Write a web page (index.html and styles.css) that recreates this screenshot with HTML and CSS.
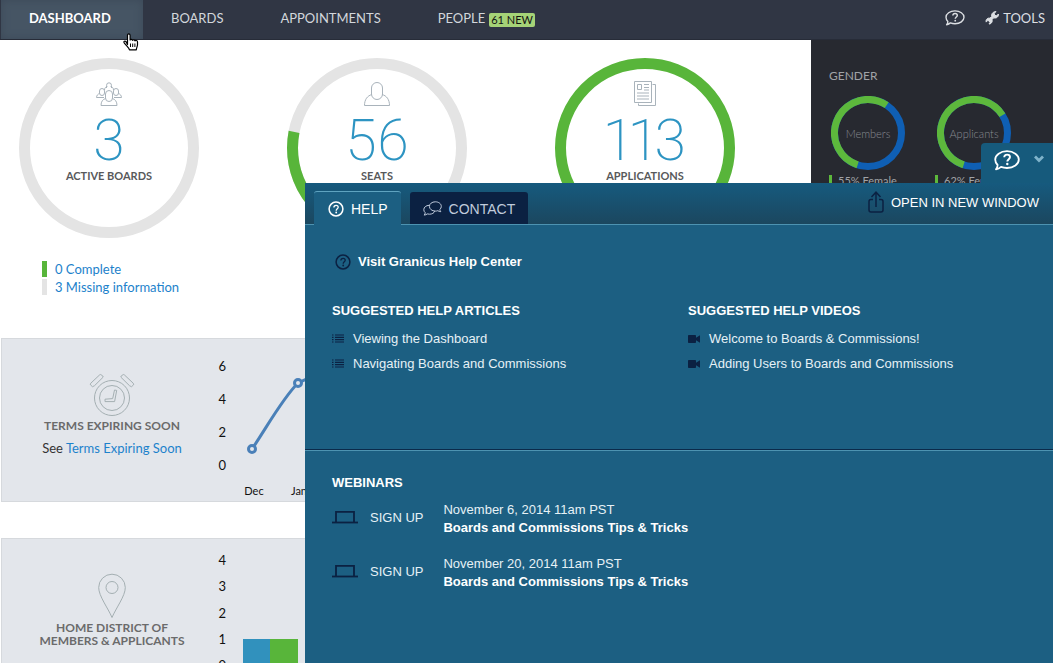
FILE: index.html
```html
<!DOCTYPE html>
<html lang="en">
<head>
  <meta charset="UTF-8">
  <title>Dashboard - Boards &amp; Commissions</title>
  <meta name="viewport" content="width=device-width, initial-scale=1">
  <link rel="stylesheet" href="styles.css">
</head>
<body>

  <!-- shared icons -->
  <svg class="defs" width="0" height="0" aria-hidden="true">
    <symbol id="i-bubble" viewBox="0 0 26 21">
      <path d="M13 1.200C19.600 1.200 24.800 5 24.800 9.600S19.600 18 13 18c-2.200 0-4.200-.4-6-1.100-1.400 1.200-3 2-5 2.400 1.100-1.300 1.600-2.800 1.600-4.300C2.100 13.500 1.200 11.600 1.200 9.600 1.200 5 6.400 1.200 13 1.200z" fill="none" stroke="currentColor" stroke-width="1.800" stroke-linejoin="round"/>
      <path d="M10.200 7.300c.1-1.700 1.200-2.700 2.900-2.700s2.900 1 2.900 2.500c0 2-2.700 2.200-2.700 4.500" fill="none" stroke="currentColor" stroke-width="1.900"/>
      <circle cx="13.300" cy="14" r="1.200" fill="currentColor"/>
    </symbol>
    <symbol id="i-question" viewBox="0 0 16 16">
      <circle cx="8" cy="8" r="6.900" fill="none" stroke="currentColor" stroke-width="1.500"/>
      <path d="M5.900 6.500c0-1.400.9-2.200 2.200-2.200s2.100.8 2.100 1.900c0 1.500-2 1.700-2 3.500" fill="none" stroke="currentColor" stroke-width="1.300"/>
      <circle cx="8.200" cy="11.500" r=".9" fill="currentColor"/>
    </symbol>
    <symbol id="i-list" viewBox="0 0 12 9">
      <path d="M0 1h1.500M0 3.300h1.500M0 5.700h1.500M0 8h1.500M3 1h9M3 3.300h9M3 5.700h9M3 8h9" stroke="currentColor" stroke-width="1.200"/>
    </symbol>
    <symbol id="i-video" viewBox="0 0 12 8">
      <path d="M0 .8Q0 0 .8 0h6.400Q8 0 8 .8v2L12 .3v7.400L8 5.200v2q0 .8-.8.8H.8Q0 8 0 7.200z" fill="currentColor"/>
    </symbol>
    <symbol id="i-laptop" viewBox="0 0 26 14">
      <path d="M4 12V1.800h18V12" fill="none" stroke="currentColor" stroke-width="1.800"/>
      <path d="M0 12.500h26" stroke="currentColor" stroke-width="1.800"/>
    </symbol>
  </svg>

  <header class="topbar">
    <nav class="nav">
      <a href="#" class="nav-item active">DASHBOARD</a>
      <a href="#" class="nav-item">BOARDS</a>
      <a href="#" class="nav-item">APPOINTMENTS</a>
      <a href="#" class="nav-item">PEOPLE <span class="badge">61 NEW</span></a>
    </nav>
    <div class="tools">
      <a href="#" class="tool" aria-label="Help"><svg width="20" height="16"><use href="#i-bubble"/></svg></a>
      <a href="#" class="tool">
        <svg width="14" height="14" viewBox="0 0 14 14"><path d="M9.600.7 11 .6 9.300 2.300l.4 2 2 .5L13.400 3c.3 1.700-.6 3-1.900 3.700-1 .5-2 .4-2.800.1L7 8.700c.6 1.700-.2 3.400-1.900 4.200L4 13l1-1.600-.8-1.500-1.700-.3-1.300 1.500C.8 9.900 1.100 8.500 2.200 7.700c1-.7 1.900-.7 2.700-.5L6.700 5.400C6.200 3.400 7.400 1.400 9.600.7z" fill="currentColor" stroke="currentColor" stroke-linejoin="round"/></svg>
        TOOLS
      </a>
    </div>
  </header>

  <div class="layout">
    <main class="main">
      <section class="stats">
        <div class="stat">
          <div class="ring">
            <svg class="ring-arc" viewBox="0 0 180 180"><circle class="track" cx="90" cy="90" r="84.500"/></svg>
            <svg class="stat-icon" width="26" height="26" viewBox="0 0 26 26">
              <path d="M10.500 7V4.500a2.500 2.700 0 0 1 5 0V7"/>
              <path d="M8.500 9c0-2 1.300-3.300 3-3.700M17.500 9c0-2-1.300-3.300-3-3.700"/>
              <rect x="3.500" y="7.500" width="5" height="7" rx="2.500"/>
              <rect x="17.500" y="7.500" width="5" height="7" rx="2.500"/>
              <path d="M3.600 12.500C1.700 13 .6 14.600.5 16.500H8M22.400 12.500c1.900.5 3 2.100 3.100 4H18"/>
              <rect x="9.500" y="9.500" width="7" height="11" rx="3.500"/>
              <path d="M9.800 17.500c-3 .7-4.800 3-4.800 7h16c0-4-1.800-6.300-4.800-7"/>
            </svg>
            <div class="num">3</div>
            <div class="stat-label">ACTIVE BOARDS</div>
          </div>
          <ul class="legend">
            <li class="complete"><a href="#">0 Complete</a></li>
            <li class="missing"><a href="#">3 Missing information</a></li>
          </ul>
        </div>
        <div class="stat">
          <div class="ring">
            <svg class="ring-arc" viewBox="0 0 180 180">
              <circle class="track" cx="90" cy="90" r="84.500"/>
              <circle class="fill" cx="90" cy="90" r="84.500" pathLength="360" stroke-dasharray="101 259" transform="rotate(90 90 90)"/>
            </svg>
            <svg class="stat-icon" width="26" height="26" viewBox="0 0 26 26">
              <rect x="7.500" y="1.500" width="11" height="17" rx="5.500"/>
              <path d="M8 13.500c-4.600 1.200-7.500 5-7.500 11h25c0-6-2.900-9.800-7.500-11"/>
            </svg>
            <div class="num">56</div>
            <div class="stat-label">SEATS</div>
          </div>
        </div>
        <div class="stat">
          <div class="ring">
            <svg class="ring-arc" viewBox="0 0 180 180"><circle class="fill" cx="90" cy="90" r="84.500"/></svg>
            <svg class="stat-icon" width="26" height="26" viewBox="0 0 26 26">
              <path d="M2.500.5h17v21h-17zM20.500 3.500h3v21h-17v-2"/>
              <path d="M5.500 3.500h4v5h-4zM12 3.500h5M12 6.500h5M12 9h5M5 12h12M5 15h12M5 18h12"/>
            </svg>
            <div class="num">113</div>
            <div class="stat-label">APPLICATIONS</div>
          </div>
        </div>
      </section>

      <section class="panel">
        <div class="panel-info">
          <svg class="panel-icon" width="46" height="44" viewBox="0 0 46 44">
            <circle cx="23" cy="25" r="17.500"/>
            <circle cx="23" cy="25" r="12.500"/>
            <path d="M25.500 17l2.200.4-2.100 11.200H16v-2.400l7.700-.6z"/>
            <path d="M1.800 10.200 10.500 2q1.200-1 2.200 0l1.600 2-8.800 8.700-2 1-1.800-1.600q-.9-1 .1-1.900zM44.200 10.200 35.500 2q-1.200-1-2.200 0l-1.600 2 8.800 8.700 2 1 1.800-1.600q.9-1-.1-1.900z"/>
          </svg>
          <h2>TERMS EXPIRING SOON</h2>
          <p>See <a href="#">Terms Expiring Soon</a></p>
        </div>
        <svg class="chart" height="162">
          <g class="y-labels">
            <text x="24" y="32">6</text>
            <text x="24" y="65">4</text>
            <text x="24" y="98">2</text>
            <text x="24" y="131">0</text>
          </g>
          <g class="x-labels">
            <text x="52" y="156">Dec</text>
            <text x="97" y="156">Jan</text>
          </g>
          <path class="line" d="M50 110C65 88 80 60 96 44Q103 40 112 38"/>
          <circle class="dot" cx="50" cy="110" r="3.500"/>
          <circle class="dot" cx="96" cy="44" r="3.500"/>
        </svg>
      </section>

      <section class="panel">
        <div class="panel-info">
          <svg class="panel-icon" width="28" height="46" viewBox="0 0 28 46">
            <path d="M14 44.500C10 35 .7 23 .7 14.500a13.300 13.300 0 0 1 26.600 0C27.300 23 18 35 14 44.500z"/>
            <circle cx="14" cy="14.500" r="6"/>
          </svg>
          <h2>HOME DISTRICT OF<br>MEMBERS &amp; APPLICANTS</h2>
        </div>
        <svg class="chart" height="162">
          <g class="y-labels">
            <text x="24" y="26">4</text>
            <text x="24" y="52">3</text>
            <text x="24" y="79">2</text>
            <text x="24" y="105">1</text>
            <text x="24" y="131">0</text>
          </g>
          <rect class="bar-members" x="41" y="100" width="27" height="27"/>
          <rect class="bar-applicants" x="68" y="100" width="28" height="27"/>
        </svg>
      </section>
    </main>

    <aside class="sidebar">
      <h2>GENDER</h2>
      <div class="genders">
        <div class="gender">
          <div class="donut">
            <svg viewBox="0 0 74 74">
              <circle class="male" cx="37" cy="37" r="33.500"/>
              <circle class="female" cx="37" cy="37" r="33.500" pathLength="360" stroke-dasharray="196 164" transform="rotate(108 37 37)"/>
            </svg>
            <span>Members</span>
          </div>
          <div class="gender-key">55% Female</div>
        </div>
        <div class="gender">
          <div class="donut">
            <svg viewBox="0 0 74 74">
              <circle class="male" cx="37" cy="37" r="33.500"/>
              <circle class="female" cx="37" cy="37" r="33.500" pathLength="360" stroke-dasharray="220 140" transform="rotate(108 37 37)"/>
            </svg>
            <span>Applicants</span>
          </div>
          <div class="gender-key">62% Female</div>
        </div>
      </div>
    </aside>
  </div>

  <section class="help">
    <button class="help-toggle" aria-label="Toggle help">
      <svg width="26" height="21"><use href="#i-bubble"/></svg>
      <svg class="chevron" width="10" height="8" viewBox="0 0 10 8"><path d="M1 1.500l4 4 4-4" fill="none" stroke="currentColor" stroke-width="2.800"/></svg>
    </button>

    <div class="help-bar">
      <button class="tab tab-active"><svg width="16" height="16"><use href="#i-question"/></svg>HELP</button>
      <button class="tab">
        <svg width="19" height="15" viewBox="0 0 19 15" fill="none" stroke="currentColor" stroke-linejoin="round"><path d="M12.300.8c3.400 0 6 2 6 4.600 0 1.200-.5 2.200-1.400 3 0 1 .3 1.700.9 2.300-1.100 0-2.100-.4-3-1-.8.3-1.600.4-2.500.4-3.300 0-5.900-2.100-5.900-4.700S9 .8 12.300.8z"/><path d="M6.200 4.300C3 4.400.8 6.300.8 8.700c0 1.200.5 2.200 1.400 2.900 0 1-.3 1.800-1 2.500 1.300-.1 2.300-.5 3-1.200.7.200 1.500.3 2.300.3 2.600 0 4.600-1.200 5.300-3.100"/></svg>CONTACT
      </button>
      <a href="#" class="open-window">
        <svg width="16" height="22" viewBox="0 0 16 22" fill="none" stroke="currentColor" stroke-width="1.500"><path d="M5 8.500H3q-2 0-2 2V19q0 2 2 2h10q2 0 2-2v-8.500q0-2-2-2h-2M8 16V1.500M3.500 6 8 1.200 12.500 6"/></svg>OPEN IN NEW WINDOW
      </a>
    </div>

    <div class="help-body">
      <a href="#" class="help-center"><svg width="16" height="16"><use href="#i-question"/></svg>Visit Granicus Help Center</a>
      <div class="suggested">
        <div>
          <h3>SUGGESTED HELP ARTICLES</h3>
          <ul>
            <li><a href="#"><svg width="12" height="9"><use href="#i-list"/></svg>Viewing the Dashboard</a></li>
            <li><a href="#"><svg width="12" height="9"><use href="#i-list"/></svg>Navigating Boards and Commissions</a></li>
          </ul>
        </div>
        <div>
          <h3>SUGGESTED HELP VIDEOS</h3>
          <ul>
            <li><a href="#"><svg width="12" height="8"><use href="#i-video"/></svg>Welcome to Boards &amp; Commissions!</a></li>
            <li><a href="#"><svg width="12" height="8"><use href="#i-video"/></svg>Adding Users to Boards and Commissions</a></li>
          </ul>
        </div>
      </div>
    </div>

    <div class="webinars">
      <h3>WEBINARS</h3>
      <div class="webinar">
        <a href="#"><svg width="26" height="14"><use href="#i-laptop"/></svg>SIGN UP</a>
        <div>November 6, 2014 11am PST<br><b>Boards and Commissions Tips &amp; Tricks</b></div>
      </div>
      <div class="webinar">
        <a href="#"><svg width="26" height="14"><use href="#i-laptop"/></svg>SIGN UP</a>
        <div>November 20, 2014 11am PST<br><b>Boards and Commissions Tips &amp; Tricks</b></div>
      </div>
    </div>
  </section>

  <!-- hand pointer -->
  <svg class="pointer" width="16" height="18" viewBox="0 0 16 18" aria-hidden="true">
    <path d="M4.500 11.500V2.300C4.500.4 7 .4 7.100 2.300V7c.4-1 2.200-.9 2.500.3.500-.9 2.100-.6 2.400.5.700-.7 2.500-.4 2.500 1.300v2.700c0 1.600-1 2.500-1.200 5H6.500C6 14.500 3.800 13.300 1.200 9.800.3 8.300 2 7.400 3 8.600z" fill="#fff" stroke="#000" stroke-width="1.200" stroke-linejoin="round"/>
    <path d="M7.500 10.500v3.500M9.700 10.500v3.500M11.900 10.500v3.500" stroke="#000"/>
  </svg>

</body>
</html>
```

FILE: styles.css
```css
* {
  box-sizing: border-box;
}

body {
  margin: 0;
  height: 100vh;
  overflow: hidden;
  display: flex;
  flex-direction: column;
  background: #fff;
  color: #333;
  font-family: Lato, "Liberation Sans", sans-serif;
  font-size: 13px;
}

a {
  color: #1d82cb;
  text-decoration: none;
}

h2, h3, p, ul {
  margin: 0;
  padding: 0;
}

ul {
  list-style: none;
}

svg {
  flex: none;
}

button {
  border: 0;
  padding: 0;
  font: inherit;
  cursor: pointer;
}

.defs {
  position: absolute;
}

/* top bar */
.topbar {
  display: flex;
  justify-content: space-between;
  flex: none;
  height: 40px;
  padding: 0 8px 0 1px;
  background: #303644;
  border-bottom: 1px solid #272c38;
}

.nav {
  display: flex;
}

.nav-item {
  display: flex;
  align-items: center;
  gap: 4px;
  padding: 0 29px 3px 28px;
  color: #d3d7dc;
}

.active {
  min-width: 142px;
  background: #465564;
  box-shadow: inset 0 0 8px #3c4958;
  color: #fff;
  font-weight: bold;
}

.badge {
  margin-top: 3px;
  padding: 0 2px;
  border-radius: 2px;
  background: #a5d377;
  color: #111;
  font-size: 11px;
  line-height: 14px;
}

.tools {
  display: flex;
  gap: 20px;
}

.tool {
  display: flex;
  align-items: center;
  gap: 4px;
  padding-bottom: 3px;
  color: #dcdfe3;
}

/* dashboard */
.layout {
  display: flex;
  flex: 1;
  min-height: 0;
}

.main {
  flex: 1;
  min-width: 0;
}

.stats {
  display: flex;
  gap: 88px;
  height: 298px;
  padding: 18px 0 0 19px;
}

.stat {
  flex: none;
  width: 180px;
}

.ring {
  position: relative;
  display: flex;
  flex-direction: column;
  align-items: center;
  height: 180px;
  padding-top: 23px;
}

.ring-arc {
  position: absolute;
  inset: 0;
}

.ring-arc circle {
  fill: none;
  stroke-width: 11px;
}

.track {
  stroke: #e4e4e4;
}

.fill {
  stroke: #58b53a;
}

.stat-icon {
  fill: none;
  stroke: #a9b3bb;
}

.num {
  padding-top: 6px;
  color: #2d94c2;
  font-family: Roboto, Lato, sans-serif;
  font-size: 57px;
  font-weight: 200;
  font-variant-numeric: proportional-nums;
  line-height: 56px;
}

.stat-label {
  color: #58595b;
  font-size: 11px;
  font-weight: bold;
  line-height: 14px;
}

.legend {
  padding: 23px 0 0 23px;
}

.legend li {
  margin-bottom: 2px;
  padding-left: 8px;
  border-left: 5px solid #e4e4e4;
  line-height: 16px;
}

.legend .complete {
  border-color: #58b53a;
}

.panel {
  display: flex;
  height: 164px;
  margin: 0 0 36px 1px;
  border: 1px solid #d6d9dd;
  background: #e3e6eb;
}

.panel-info {
  flex: none;
  display: flex;
  flex-direction: column;
  align-items: center;
  width: 200px;
  padding: 34px 0 0 20px;
  text-align: center;
}

.panel-info h2 {
  margin-top: 2px;
  color: #6b6b6b;
  font-size: 12px;
  line-height: 13px;
}

.panel-info p {
  margin-top: 8px;
  line-height: 16px;
}

.panel-icon {
  fill: none;
  stroke: #a4afb2;
}

.chart {
  flex: 1;
  min-width: 0;
  fill: #111;
}

.y-labels {
  font-size: 13px;
  text-anchor: end;
}

.x-labels {
  font-size: 11px;
  text-anchor: middle;
}

.line {
  fill: none;
  stroke: #4a80b8;
  stroke-width: 3px;
}

.dot {
  fill: #e3e6eb;
  stroke: #4a80b8;
  stroke-width: 3px;
}

.bar-members {
  fill: #3191bd;
}

.bar-applicants {
  fill: #58b53a;
}

.sidebar {
  flex: none;
  width: 242px;
  padding: 28px 18px;
  background: #272930;
  color: #a0a3a7;
}

.sidebar h2 {
  font-size: 12px;
  font-weight: normal;
  line-height: 16px;
}

.genders {
  display: flex;
  gap: 32px;
  padding: 12px 0 0 2px;
}

.donut {
  display: grid;
  place-items: center;
  width: 74px;
  height: 74px;
  color: #888b91;
  font-size: 11px;
  font-weight: 300;
}

.donut > * {
  grid-area: 1 / 1;
}

.donut circle {
  fill: none;
  stroke-width: 7px;
}

.male {
  stroke: #0f5fb4;
}

.female {
  stroke: #5db83c;
}

.gender-key {
  margin: 5px 0 0 -2px;
  padding-left: 6px;
  border-left: 3px solid #5db83c;
  font-size: 11px;
  line-height: 12px;
  white-space: nowrap;
}

/* help drawer */
.help {
  position: fixed;
  top: 183px;
  right: 0;
  bottom: 0;
  left: 305px;
  background: #1c5f82;
  color: #e6f1f6;
  font-family: "Liberation Sans", Arial, sans-serif;
  font-size: 13px;
}

.help a {
  color: inherit;
}

.help h3 {
  color: #fff;
  font-size: 13px;
  line-height: 16px;
}

.help-toggle {
  position: absolute;
  right: 0;
  bottom: 100%;
  display: flex;
  gap: 14px;
  width: 72px;
  height: 40px;
  padding: 7px 0 0 13px;
  border-radius: 4px 0 0 0;
  background: #165a7c;
  color: #fff;
}

.chevron {
  margin-top: 5px;
  color: #7fb3cb;
}

.help-bar {
  display: flex;
  align-items: flex-end;
  gap: 9px;
  height: 42px;
  padding: 0 14px 0 9px;
  border-bottom: 1px solid #4d93b1;
  background: linear-gradient(#165a7e, #1b475f);
}

.tab {
  display: flex;
  align-items: center;
  gap: 7px;
  height: 32px;
  padding: 1px 13px 0;
  border-radius: 3px 3px 0 0;
  background: #0b2142;
  color: #c0cbdc;
  font-size: 14px;
}

.tab-active {
  height: 34px;
  margin-bottom: -1px;
  padding-left: 14px;
  border-top: 1px solid #5fa3c0;
  background: #1c5f82;
  color: #fff;
}

.open-window {
  display: flex;
  align-items: center;
  gap: 7px;
  height: 22px;
  margin: 0 0 11px auto;
}

.help .open-window {
  color: #fff;
}

.help-center svg,
.suggested svg,
.webinar svg,
.open-window svg {
  color: #0b2142;
}

.help-body {
  height: 225px;
  padding: 29px 27px;
  border-bottom: 1px solid #0b2a4a;
}

.help-center {
  display: flex;
  align-items: center;
  gap: 7px;
  padding-left: 3px;
  font-weight: bold;
  line-height: 16px;
}

.help .help-center {
  color: #fff;
}

.suggested {
  display: grid;
  grid-template-columns: 1fr 1fr;
  gap: 18px;
  padding-top: 33px;
}

.suggested ul {
  padding-top: 7px;
}

.suggested a {
  display: flex;
  align-items: center;
  gap: 9px;
  line-height: 25px;
}

.webinars {
  padding: 24px 27px;
  border-top: 1px solid #4d93b1;
}

.webinar {
  display: flex;
  align-items: center;
  gap: 20px;
  margin: 10px 0 18px;
  line-height: 18px;
}

.webinar a {
  display: flex;
  align-items: center;
  gap: 12px;
  padding-bottom: 2px;
}

.webinar svg {
  margin-bottom: 2px;
}

.webinar b {
  color: #fff;
}

.pointer {
  position: absolute;
  left: 123px;
  top: 33px;
}
```
